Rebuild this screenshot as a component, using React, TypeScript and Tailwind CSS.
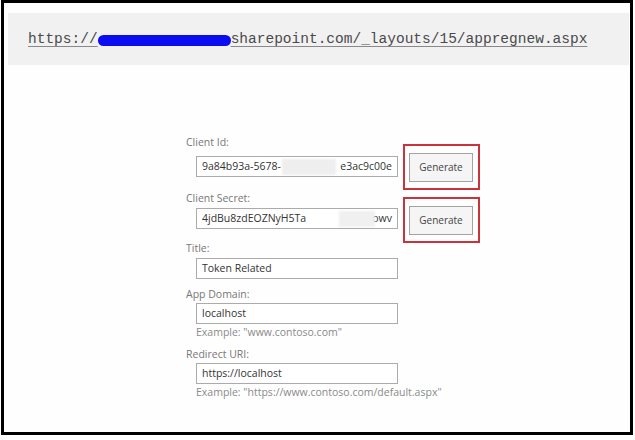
import React from "react";

const sans = "font-['Segoe_UI','Open_Sans','Noto_Sans',sans-serif]";

function Label({ children, className = "" }: { children: React.ReactNode; className?: string }) {
  return <div className={`text-[10.5px] leading-4 text-[#777] ${className}`}>{children}</div>;
}

function Field({ children, className = "" }: { children: React.ReactNode; className?: string }) {
  return (
    <div
      className={`ml-[10px] flex h-[21px] w-[202px] items-center overflow-hidden border border-[#ababab] bg-white pl-[5px] text-[10.5px] text-[#333] whitespace-nowrap ${className}`}
    >
      {children}
    </div>
  );
}

function Generate({ className = "" }: { className?: string }) {
  return (
    <div className={`ml-[5px] flex h-[46px] w-[77px] shrink-0 items-start border-2 border-[#c9343c] pl-[4px] pt-[7px] ${className}`}>
      <div className="flex h-[29px] w-[64px] items-center justify-center border border-[#a3a3a3] bg-[#f5f5f5] text-[10px] text-[#444]">
        Generate
      </div>
    </div>
  );
}

export default function App() {
  return (
    <div className={`h-[440px] w-[635px] bg-white ${sans}`}>
      <div className="ml-[1px] h-[435px] w-[632px] border-[3px] border-black bg-[#fefefe]">
        <div className="ml-[4px] mr-[1px] mt-[10px] flex h-[52px] items-center bg-[#f1f1f2] pl-[20px]">
          <span className="font-['Liberation_Mono',monospace] text-[14.5px] leading-5 text-[#4a4a4a] underline decoration-[#888] underline-offset-[3px] whitespace-nowrap">
            https://
            <span className="inline-block h-[11px] w-[133px] translate-y-[1px] rounded-full bg-[#0b0cf2] align-middle" />
            sharepoint.com/_layouts/15/appregnew.aspx
          </span>
        </div>

        <div className="ml-[182px] mt-[69px] flex flex-col">
          <Label>Client Id:</Label>
          <div className="mt-[6px] flex items-center">
            <Field>
              <span>9a84b93a-5678-</span>
              <span className="ml-[1px] inline-block h-[16px] w-[54px] bg-[#eeeeef] blur-[1px]" />
              <span className="ml-auto mr-[5px]">e3ac9c00e</span>
            </Field>
            <div className="-my-[13px]">
              <Generate />
            </div>
          </div>

          <Label className="mt-[13px]">Client Secret:</Label>
          <div className="mt-[2px] flex items-center">
            <Field>
              <span>4jdBu8zdEOZNyH5Ta</span>
              <span className="ml-auto inline-block h-[16px] w-[36px] bg-[#f0f0f1] blur-[1px]" />
              <span className="-ml-[3px] mr-[5px]">owv</span>
            </Field>
            <div className="-my-[13px] translate-y-[1px]">
              <Generate />
            </div>
          </div>

          <Label className="mt-[11px]">Title:</Label>
          <Field className="mt-[2px] h-[20px]">Token Related</Field>

          <Label className="mt-[7px]">App Domain:</Label>
          <Field className="mt-[1px] h-[20px]">localhost</Field>
          <div className="ml-[10px] text-[10.5px] leading-4 text-[#8a8a8a]">Example: "www.contoso.com"</div>

          <Label className="mt-[6px]">Redirect URI:</Label>
          <Field className="mt-[1px] h-[20px]">https://localhost</Field>
          <div className="ml-[10px] text-[10.5px] leading-4 text-[#8a8a8a]">
            Example: "https://www.contoso.com/default.aspx"
          </div>
        </div>
      </div>
    </div>
  );
}
